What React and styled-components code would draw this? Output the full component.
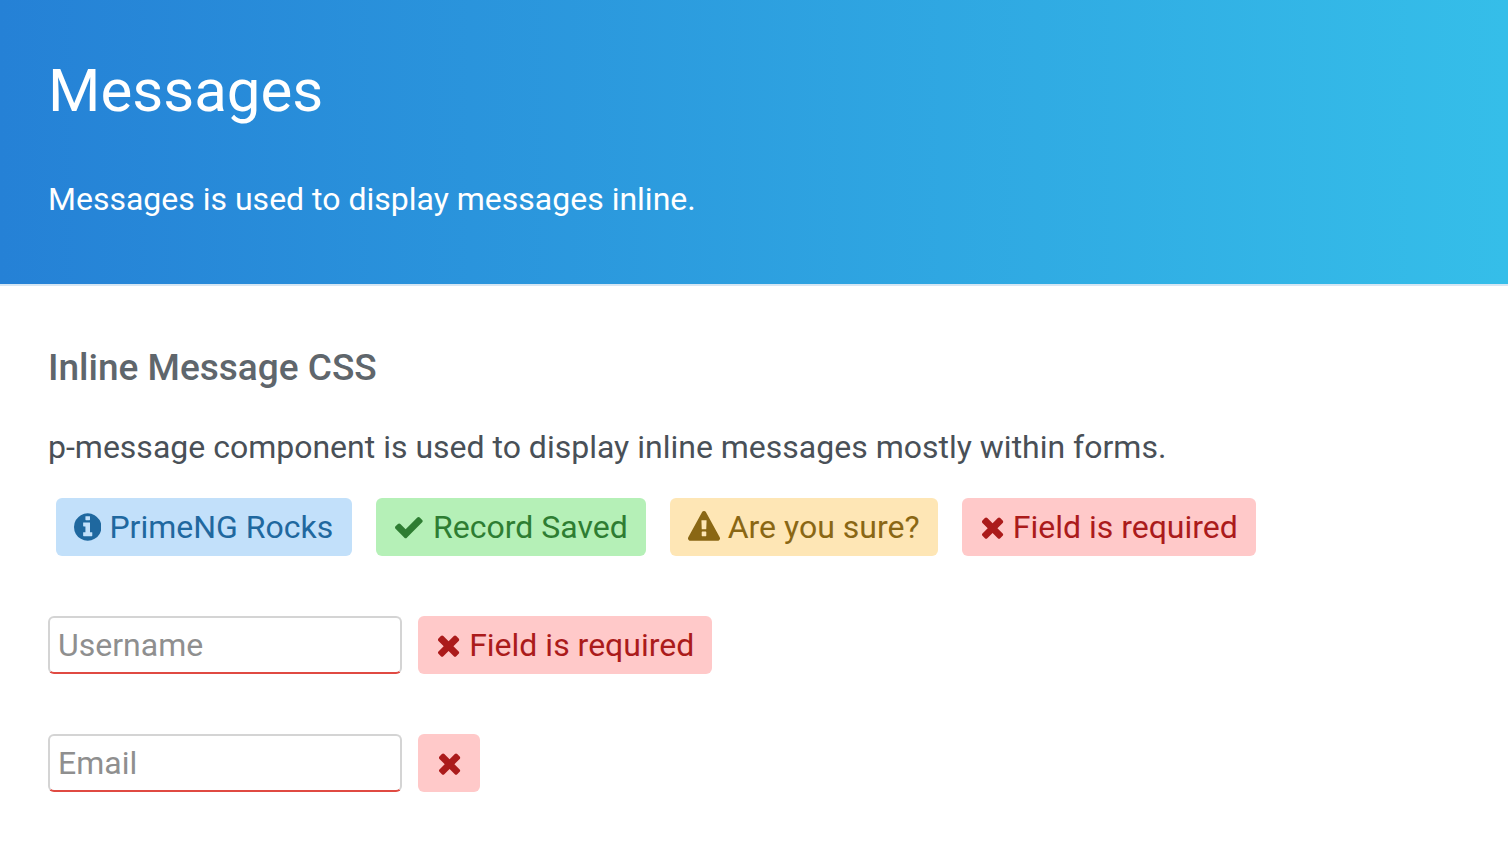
import React from 'react';
import styled, { createGlobalStyle } from 'styled-components';

const GlobalStyle = createGlobalStyle`
  html, body {
    margin: 0;
    padding: 0;
    background: #ffffff;
    font-family: Roboto, "Helvetica Neue", sans-serif;
    overflow: hidden;
  }
  * {
    box-sizing: border-box;
  }
`;

const Hero = styled.header`
  height: 286px;
  padding: 58px 48px 0;
  background: linear-gradient(to right, #2581d6, #35bee9);
  border-bottom: 2px solid #d6e6f3;
  color: #ffffff;
`;

const HeroTitle = styled.h1`
  margin: 0;
  font-size: 60px;
  line-height: 66px;
  font-weight: 400;
`;

const HeroText = styled.p`
  margin: 56px 0 0;
  font-size: 32px;
  line-height: 38px;
  font-weight: 400;
`;

const Content = styled.main`
  padding: 59px 48px 0;
`;

const SectionTitle = styled.h3`
  margin: 0;
  font-size: 37px;
  line-height: 46px;
  font-weight: 500;
  color: #5f666c;
`;

const Lead = styled.p`
  margin: 36px 0 0;
  font-size: 32px;
  line-height: 40px;
  color: #495057;
`;

const MessageRow = styled.div`
  display: flex;
  gap: 24px;
  margin: 31px 0 0 8px;
`;

const palette = {
  info: { bg: '#c2e0fa', fg: '#1f689f', gap: 8, right: 19 },
  success: { bg: '#b5f0b7', fg: '#2e7d32', gap: 9, right: 18 },
  warn: { bg: '#fee6b5', fg: '#8a6714', gap: 8, right: 18 },
  error: { bg: '#ffc9c9', fg: '#ab1b1b', gap: 8, right: 18 },
};

const Message = styled.div`
  display: flex;
  align-items: center;
  gap: ${(p) => palette[p.$kind].gap}px;
  height: 58px;
  padding: 0 ${(p) => (p.$iconOnly ? 18.5 : palette[p.$kind].right)}px 0 ${(p) => (p.$iconOnly ? 18.5 : 18)}px;
  border-radius: 6px;
  font-size: 32px;
  background: ${(p) => palette[p.$kind].bg};
  color: ${(p) => palette[p.$kind].fg};
`;

const FieldRow = styled.div`
  display: flex;
  gap: 16px;
  margin-top: 60px;
`;

const TextField = styled.input`
  width: 354px;
  height: 58px;
  padding: 0 8px;
  border: 2px solid #d4d4d4;
  border-bottom-color: #e04a42;
  border-radius: 6px;
  outline: none;
  background: #ffffff;
  font-family: inherit;
  font-size: 32px;
  color: #495057;

  &::placeholder {
    color: #8f8f8f;
    opacity: 1;
  }
`;

const Glyph = styled.svg`
  flex: none;
  height: 32px;
  fill: currentColor;
`;

// solid glyphs, each with the advance width of its font cell
const glyphs = {
  info: {
    left: 128,
    width: 1536,
    d: 'M1152 1376v-160q0-14-9-23t-23-9h-96v-512q0-14-9-23t-23-9h-320q-14 0-23 9t-9 23v160q0 14 9 23t23 9h96v320h-96q-14 0-23 9t-9 23v160q0 14 9 23t23 9h448q14 0 23-9t9-23zm-128-896v-160q0-14-9-23t-23-9h-192q-14 0-23 9t-9 23v160q0 14 9 23t23 9h192q14 0 23-9t9-23zm640 416q0 209-103 385.5t-279.5 279.5-385.5 103-385.5-103-279.5-279.5-103-385.5 103-385.5 279.5-279.5 385.5-103 385.5 103 279.5 279.5 103 385.5z',
  },
  check: {
    left: 64,
    width: 1664,
    d: 'M1671 566q0 40-28 68l-724 724-136 136q-28 28-68 28t-68-28l-136-136-362-362q-28-28-28-68t28-68l136-136q28-28 68-28t68 28l294 295 656-657q28-28 68-28t68 28l136 136q28 28 28 68z',
  },
  warn: {
    left: 0,
    width: 1792,
    d: 'M1024 1375v-190q0-14-9.5-23.5t-22.5-9.5h-192q-13 0-22.5 9.5t-9.5 23.5v190q0 14 9.5 23.5t22.5 9.5h192q13 0 22.5-9.5t9.5-23.5zm-2-374l18-459q0-12-10-19-13-11-24-11h-220q-11 0-24 11-10 7-10 21l17 457q0 10 10 16.5t24 6.5h185q14 0 23.5-6.5t10.5-16.5zm-14-934l768 1408q35 63-2 126-17 29-46.5 46t-63.5 17h-1536q-34 0-63.5-17t-46.5-46q-37-63-2-126l768-1408q17-31 47-49t65-18 65 18 47 49z',
  },
  times: {
    left: 192,
    width: 1408,
    d: 'M1490 1322q0 40-28 68l-136 136q-28 28-68 28t-68-28l-294-294-294 294q-28 28-68 28t-68-28l-136-136q-28-28-28-68t28-68l294-294-294-294q-28-28-28-68t28-68l136-136q28-28 68-28t68 28l294 294 294-294q28-28 68-28t68 28l136 136q28 28 28 68t-28 68l-294 294 294 294q28 28 28 68z',
  },
};

const Icon = ({ name }) => {
  const { left, width, d } = glyphs[name];
  return (
    <Glyph viewBox={`${left} 0 ${width} 1792`} width={(width / 1792) * 32}>
      <path d={d} />
    </Glyph>
  );
};

const App = () => {
  return (
    <>
      <GlobalStyle />
      <Hero>
        <HeroTitle>Messages</HeroTitle>
        <HeroText>Messages is used to display messages inline.</HeroText>
      </Hero>
      <Content>
        <SectionTitle>Inline Message CSS</SectionTitle>
        <Lead>p-message component is used to display inline messages mostly within forms.</Lead>
        <MessageRow>
          <Message $kind="info"><Icon name="info" />PrimeNG Rocks</Message>
          <Message $kind="success"><Icon name="check" />Record Saved</Message>
          <Message $kind="warn"><Icon name="warn" />Are you sure?</Message>
          <Message $kind="error"><Icon name="times" />Field is required</Message>
        </MessageRow>
        <FieldRow>
          <TextField placeholder="Username" />
          <Message $kind="error"><Icon name="times" />Field is required</Message>
        </FieldRow>
        <FieldRow>
          <TextField placeholder="Email" />
          <Message $kind="error" $iconOnly><Icon name="times" /></Message>
        </FieldRow>
      </Content>
    </>
  );
};

export default App;
